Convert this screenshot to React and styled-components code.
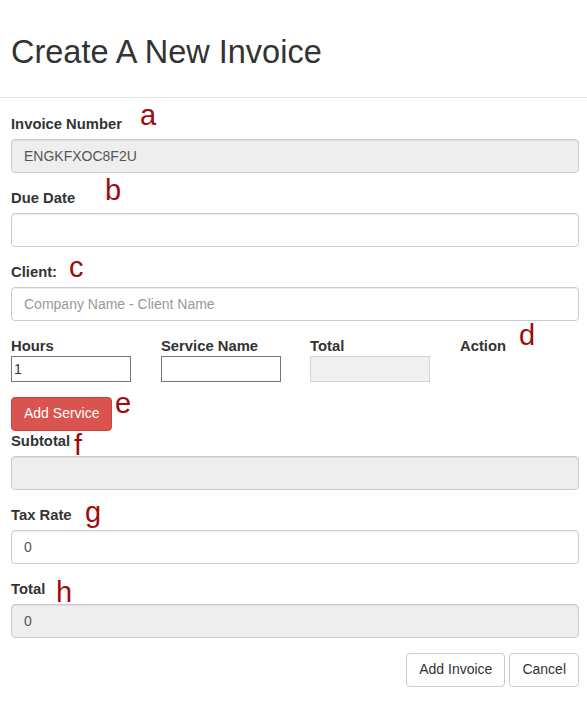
import React from 'react'
import styled, { createGlobalStyle } from 'styled-components'

const GlobalStyle = createGlobalStyle`
  body {
    margin: 0;
    background: #fff;
    font-family: "Liberation Sans", Arial, Helvetica, sans-serif;
    font-size: 14px;
    line-height: 1.42857;
    color: #333;
  }
  * { box-sizing: border-box; }
`

const Page = styled.div`
  position: relative;
  width: 587px;
`

const Header = styled.div`
  padding: 33px 11px 25px;
  border-bottom: 1px solid #e6e6e6;
  margin-bottom: 16px;
`

const Title = styled.h1`
  margin: 0;
  font-size: 32.5px;
  font-weight: 400;
  line-height: 1.2;
  color: #333;
`

const Form = styled.form`
  padding: 0 8px 0 11px;
`

const Group = styled.div`
  margin-bottom: ${p => (p.$tight ? '0' : '15px')};
`

const Label = styled.label`
  display: block;
  font-size: 14.8px;
  line-height: 20px;
  font-weight: 700;
  margin-bottom: ${p => (p.$gap !== undefined ? p.$gap : 5)}px;
`

const Input = styled.input`
  display: block;
  width: 100%;
  height: 34px;
  padding: 6px 12px;
  font: inherit;
  color: #555;
  background: ${p => (p.readOnly ? '#eee' : '#fff')};
  border: 1px solid #ccc;
  border-radius: 4px;
  box-shadow: inset 0 1px 1px rgba(0, 0, 0, 0.075);
  &::placeholder { color: #999; }
`

const Row = styled.div`
  display: grid;
  grid-template-columns: 150px 149px 150px auto;
  margin-bottom: 15px;
`

const Cell = styled.div``

const SmallInput = styled.input`
  display: block;
  width: 120px;
  height: 26px;
  padding: 1px 2px;
  font: inherit;
  color: #333;
  background: ${p => (p.readOnly ? '#f0f0f0' : '#fff')};
  border: 1px solid ${p => (p.readOnly ? '#d4d4d4' : '#767676')};
`

const Button = styled.button`
  display: inline-block;
  height: 34px;
  padding: 6px 12px;
  font: inherit;
  line-height: 1.42857;
  border-radius: 4px;
  cursor: pointer;
  color: ${p => (p.$danger ? '#fff' : '#333')};
  background: ${p => (p.$danger ? '#d9534f' : '#fff')};
  border: 1px solid ${p => (p.$danger ? '#d43f3a' : '#ccc')};
`

const ButtonBar = styled.div`
  display: flex;
  justify-content: flex-end;
  gap: 4px;
`

const Note = styled.span`
  position: absolute;
  left: ${p => p.$x}px;
  top: ${p => p.$y}px;
  font-family: "Liberation Sans", Arial, sans-serif;
  font-size: 29px;
  line-height: 1;
  color: #9b0d0d;
  pointer-events: none;
`

const notes = [
  ['a', 140, 101],
  ['b', 105, 176],
  ['c', 69, 253],
  ['d', 519, 321],
  ['e', 115, 389],
  ['f', 74, 431],
  ['g', 85, 498],
  ['h', 56, 578],
]

export default function App() {
  return (
    <Page>
      <GlobalStyle />
      <Header>
        <Title>Create A New Invoice</Title>
      </Header>
      <Form onSubmit={e => e.preventDefault()}>
        <Group>
          <Label>Invoice Number</Label>
          <Input readOnly value="ENGKFXOC8F2U" />
        </Group>
        <Group>
          <Label>Due Date</Label>
          <Input />
        </Group>
        <Group>
          <Label>Client:</Label>
          <Input placeholder="Company Name - Client Name" />
        </Group>
        <Row>
          <Cell>
            <Label $gap={0}>Hours</Label>
            <SmallInput defaultValue="1" />
          </Cell>
          <Cell>
            <Label $gap={0}>Service Name</Label>
            <SmallInput />
          </Cell>
          <Cell>
            <Label $gap={0}>Total</Label>
            <SmallInput readOnly />
          </Cell>
          <Cell>
            <Label $gap={0}>Action</Label>
          </Cell>
        </Row>
        <Group $tight>
          <Button type="button" $danger>Add Service</Button>
        </Group>
        <Group>
          <Label>Subtotal</Label>
          <Input readOnly />
        </Group>
        <Group>
          <Label>Tax Rate</Label>
          <Input defaultValue="0" />
        </Group>
        <Group>
          <Label>Total</Label>
          <Input readOnly value="0" />
        </Group>
        <ButtonBar>
          <Button type="button">Add Invoice</Button>
          <Button type="button">Cancel</Button>
        </ButtonBar>
      </Form>
      {notes.map(([t, x, y]) => (
        <Note key={t} $x={x} $y={y}>{t}</Note>
      ))}
    </Page>
  )
}
